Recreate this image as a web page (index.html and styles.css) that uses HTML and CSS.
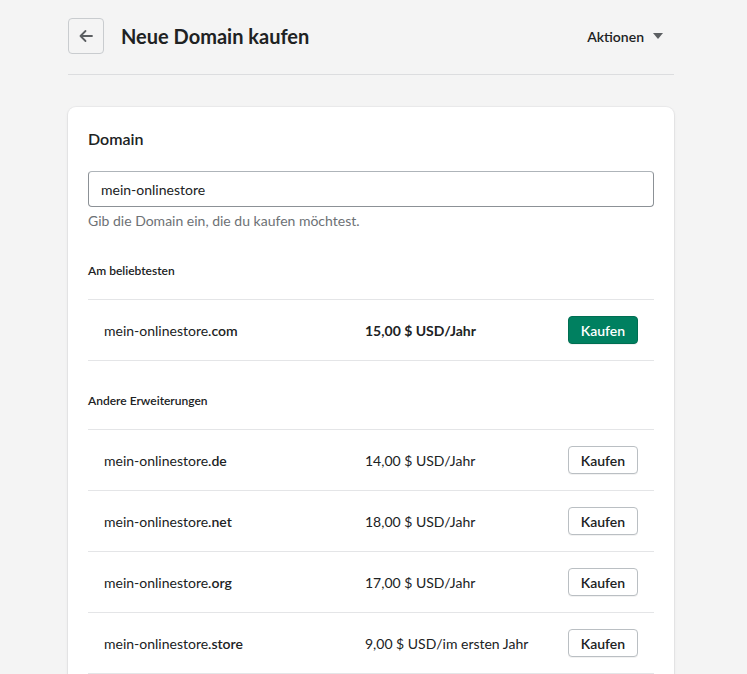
FILE: index.html
```html
<!DOCTYPE html>
<html lang="de">
<head>
<meta charset="utf-8">
<title>Neue Domain kaufen</title>
<link rel="stylesheet" href="styles.css">
</head>
<body>
<div class="page">
  <header class="topbar">
    <button class="back" aria-label="Zurück">
      <svg width="20" height="20" viewBox="0 0 20 20"><path d="M16 10H4.5M9.5 5l-5 5 5 5" fill="none" stroke="#5c5f62" stroke-width="1.8" stroke-linecap="round" stroke-linejoin="round"/></svg>
    </button>
    <h1 class="title">Neue Domain kaufen</h1>
    <div class="actions">Aktionen <svg class="caret" width="10" height="6" viewBox="0 0 10 6"><path d="M0 0h10L5 6z" fill="#5c5f62"/></svg></div>
  </header>
  <hr class="rule">
  <section class="card">
    <h2 class="card-title">Domain</h2>
    <div class="field">mein-onlinestore</div>
    <p class="help">Gib die Domain ein, die du kaufen möchtest.</p>

    <h3 class="group">Am beliebtesten</h3>
    <div class="list">
      <div class="row">
        <span class="name">mein-onlinestore<b>.com</b></span>
        <span class="price strong">15,00 $ USD/Jahr</span>
        <span class="cell-btn"><button class="btn primary">Kaufen</button></span>
      </div>
    </div>

    <h3 class="group">Andere Erweiterungen</h3>
    <div class="list">
      <div class="row">
        <span class="name">mein-onlinestore<b>.de</b></span>
        <span class="price">14,00 $ USD/Jahr</span>
        <span class="cell-btn"><button class="btn">Kaufen</button></span>
      </div>
      <div class="row">
        <span class="name">mein-onlinestore<b>.net</b></span>
        <span class="price">18,00 $ USD/Jahr</span>
        <span class="cell-btn"><button class="btn">Kaufen</button></span>
      </div>
      <div class="row">
        <span class="name">mein-onlinestore<b>.org</b></span>
        <span class="price">17,00 $ USD/Jahr</span>
        <span class="cell-btn"><button class="btn">Kaufen</button></span>
      </div>
      <div class="row">
        <span class="name">mein-onlinestore<b>.store</b></span>
        <span class="price">9,00 $ USD/im ersten Jahr</span>
        <span class="cell-btn"><button class="btn">Kaufen</button></span>
      </div>
    </div>
  </section>
</div>
</body>
</html>
```

FILE: styles.css
```css
* { box-sizing: border-box; }
html, body { margin: 0; padding: 0; }
body {
  background: #f4f4f4;
  font-family: "Lato", "Noto Sans", sans-serif;
  color: #202223;
  font-size: 14px;
}
.page {
  width: 606px;
  margin-left: 68px;
}
.topbar {
  display: flex;
  align-items: center;
  height: 72px;
}
.back {
  width: 36px;
  height: 36px;
  border: 1px solid #c9cccf;
  border-radius: 4px;
  background: #f4f4f4;
  display: flex;
  align-items: center;
  justify-content: center;
  padding: 0;
  margin-right: 17px;
}
.title {
  margin: 0;
  font-size: 20px;
  font-weight: 700;
  flex: 1;
}
.actions {
  font-size: 14px;
  font-weight: 600;
  display: flex;
  align-items: center;
  gap: 9px;
  margin-right: 11px;
}
.rule {
  border: 0;
  border-top: 1px solid #dcdddf;
  margin: 2px 0 32px;
}
.card {
  background: #fff;
  border-radius: 8px;
  box-shadow: 0 0 0 1px rgba(63,63,68,0.04), 0 1px 3px rgba(63,63,68,0.12);
  padding: 20px 20px 20px;
}
.card-title {
  margin: 0 0 20px;
  font-size: 16px;
  font-weight: 600;
  line-height: 24px;
}
.field {
  height: 36px;
  border: 1px solid #8c9196;
  border-top-color: #aeb4b9;
  border-radius: 4px;
  padding: 0 12px;
  display: flex;
  align-items: center;
  font-size: 14px;
}
.help {
  margin: 4px 0 0;
  color: #6d7175;
  font-size: 14px;
  line-height: 20px;
}
.group {
  margin: 0;
  font-size: 12px;
  font-weight: 600;
  line-height: 16px;
  padding: 32px 0 20px;
}
.list { border-top: 1px solid #e4e5e7; }
.row {
  display: grid;
  grid-template-columns: 261px 1fr auto;
  align-items: center;
  height: 61px;
  padding: 0 16px;
  border-bottom: 1px solid #e4e5e7;
}
.name { font-size: 14px; }
.name b { font-weight: 600; }
.price { font-size: 14px; }
.price.strong { font-weight: 700; }
.btn {
  font-family: inherit;
  font-size: 14px;
  font-weight: 600;
  width: 70px;
  height: 28px;
  border-radius: 4px;
  border: 1px solid #babfc3;
  background: #fff;
  color: #202223;
  box-shadow: 0 1px 0 rgba(0,0,0,0.05);
}
.btn.primary {
  background: #008060;
  border-color: #006e52;
  color: #fff;
}
```
